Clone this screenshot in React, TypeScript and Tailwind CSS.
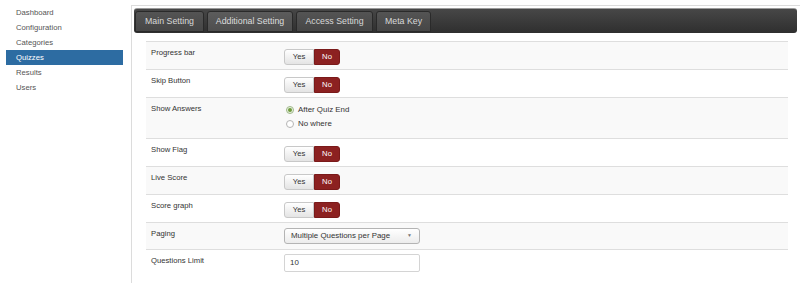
import React, { useState } from 'react';

const navItems = ['Dashboard', 'Configuration', 'Categories', 'Quizzes', 'Results', 'Users'];

const tabs = [
  { label: 'Main Setting', width: 'w-[69px]' },
  { label: 'Additional Setting', width: 'w-[86px]' },
  { label: 'Access Setting', width: 'w-[77px]' },
  { label: 'Meta Key', width: 'w-[55px]' },
];

const YesNo: React.FC = () => (
  <div className="flex h-[16px] text-[7.7px] leading-[14px] mt-[7px]">
    <span className="w-[30px] text-center border border-[#c8c8c8] rounded-l-[3px] bg-gradient-to-b from-white to-[#e4e4e4] text-[#333]">
      Yes
    </span>
    <span className="w-[26px] text-center border border-[#7a1a1a] rounded-r-[3px] bg-[#8c2121] text-white">
      No
    </span>
  </div>
);

const Radio: React.FC<{ checked?: boolean; label: string }> = ({ checked, label }) => (
  <div className="flex items-center h-[14px] pl-[2px] gap-[4px]">
    <span
      className={
        checked
          ? 'w-[8px] h-[8px] rounded-full border border-[#9fb98a] bg-[#e9f0e2] flex items-center justify-center'
          : 'w-[8px] h-[8px] rounded-full border border-[#b5b5b5] bg-white'
      }
    >
      {checked && <span className="w-[4px] h-[4px] rounded-full bg-[#6f9b3c]" />}
    </span>
    <span className="text-[7.9px] text-[#333]">{label}</span>
  </div>
);

type Row = { label: string; kind: 'toggle' | 'radio' | 'select' | 'input' };

const rows: Row[] = [
  { label: 'Progress bar', kind: 'toggle' },
  { label: 'Skip Button', kind: 'toggle' },
  { label: 'Show Answers', kind: 'radio' },
  { label: 'Show Flag', kind: 'toggle' },
  { label: 'Live Score', kind: 'toggle' },
  { label: 'Score graph', kind: 'toggle' },
  { label: 'Paging', kind: 'select' },
  { label: 'Questions Limit', kind: 'input' },
];

export default function App() {
  const [active] = useState(1);

  return (
    <div className="flex w-[800px] h-[283px] overflow-hidden bg-white font-['Liberation_Sans',Arial,sans-serif]">
      <aside className="w-[131px] shrink-0 pt-[5px]">
        {navItems.map((item) => (
          <div
            key={item}
            className={
              item === 'Quizzes'
                ? 'ml-[6px] w-[117px] h-[15px] pl-[10px] leading-[15px] text-[7.7px] bg-[#2d6ca2] text-white'
                : 'ml-[6px] w-[117px] h-[15px] pl-[10px] leading-[15px] text-[7.7px] text-[#555]'
            }
          >
            {item}
          </div>
        ))}
      </aside>

      <main className="flex-1 mt-[5px] border-l border-t border-[#dcdcdc] pt-[2px]">
        <div className="ml-[2px] mr-[3px] h-[25px] flex items-end gap-[3px] px-[1px] pb-[1px] rounded-[3px] border-t border-[#9a9a9a] bg-gradient-to-b from-[#474747] to-[#2f2f2f]">
          {tabs.map((t, i) => (
            <div
              key={t.label}
              className={
                i === active
                  ? `${t.width} h-[21px] flex items-center justify-center rounded-t-[3px] border border-[#2a2a2a] bg-gradient-to-b from-[#5c5c5c] to-[#4e4e4e] text-[8.8px] text-[#ddd]`
                  : `${t.width} h-[21px] flex items-center justify-center rounded-t-[3px] border border-[#2a2a2a] bg-gradient-to-b from-[#545454] to-[#464646] text-[8.8px] text-[#d8d8d8]`
              }
            >
              {t.label}
            </div>
          ))}
        </div>

        <div className="ml-[14px] mr-[12px] mt-[8px]">
          {rows.map((r, i) => (
            <div
              key={r.label}
              className={`flex border-t border-[#dedede] ${i % 2 === 0 ? 'bg-[#f9f9f9]' : 'bg-white'} ${
                r.kind === 'radio' ? 'h-[41px]' : r.kind === 'select' ? 'h-[27px]' : 'h-[28px]'
              }`}
            >
              <div className="w-[138px] shrink-0 pl-[5px] pt-[6px] text-[7.7px] leading-[10px] text-[#333]">
                {r.label}
              </div>
              <div className="flex-1">
                {r.kind === 'toggle' && <YesNo />}
                {r.kind === 'radio' && (
                  <div className="pt-[5px]">
                    <Radio checked label="After Quiz End" />
                    <Radio label="No where" />
                  </div>
                )}
                {r.kind === 'select' && (
                  <div className="mt-[5px] w-[136px] h-[16px] flex items-center justify-between pl-[6px] pr-[7px] rounded-[3px] border border-[#b4b4b4] bg-gradient-to-b from-white to-[#ececec] text-[7.9px] text-[#333]">
                    <span>Multiple Questions per Page</span>
                    <span className="text-[5px] text-[#777]">▼</span>
                  </div>
                )}
                {r.kind === 'input' && (
                  <div className="mt-[4px] w-[136px] h-[18px] flex items-center pl-[5px] border border-[#d4d4d4] rounded-[2px] bg-white text-[7.9px] text-[#333]">
                    10
                  </div>
                )}
              </div>
            </div>
          ))}
        </div>
      </main>
    </div>
  );
}
